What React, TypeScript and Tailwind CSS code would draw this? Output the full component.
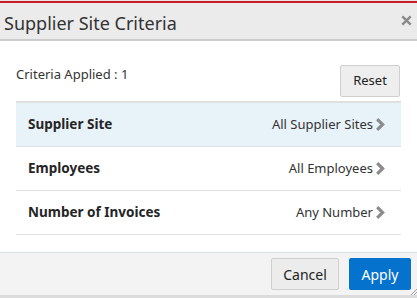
import React from "react";

function Chevron() {
  return (
    <svg width="11" height="13" viewBox="0 0 11 13" className="ml-[2px]">
      <path d="M2.2 1.2 L7.6 6.5 L2.2 11.8" fill="none" stroke="#8c8c8c" strokeWidth="3.2" />
    </svg>
  );
}

function Row({ label, value, active }: { label: string; value: string; active?: boolean }) {
  return (
    <div
      className={
        "flex items-center justify-between h-[44px] pl-[12px] pr-[15px] border-b border-[#e0e0e0] " +
        (active ? "bg-[#e8f2f9]" : "bg-white")
      }
    >
      <span className="text-[13.5px] font-bold text-[#252525]">{label}</span>
      <span className="flex items-center text-[13px] text-[#333]">
        {value}
        <Chevron />
      </span>
    </div>
  );
}

export default function App() {
  return (
    <div
      className="w-[417px] h-[298px] bg-white flex flex-col overflow-hidden"
      style={{ fontFamily: '"Noto Sans", "Open Sans", sans-serif' }}
    >
      <div className="h-[1px] bg-[#e6e6e6]" />
      <div className="h-[2px] bg-[#c81d25]" />
      <div className="h-[38px] bg-[#ebebeb] border-b-2 border-[#cbcbcb] flex items-center justify-between pl-[4px] pr-[5px]">
        <span className="text-[18px] text-[#333] leading-none pt-[4px]">Supplier Site Criteria</span>
        <svg width="11" height="11" viewBox="0 0 11 11" className="mb-[1px]">
          <path d="M1.3 1.3 L9.7 9.7 M9.7 1.3 L1.3 9.7" stroke="#8a8a8a" strokeWidth="2.4" />
        </svg>
      </div>
      <div className="flex-1 px-[16px] flex flex-col">
        <div className="flex justify-between items-start pt-[24px] pr-[1px]">
          <span className="text-[13px] text-[#333] leading-none mt-[3px]">Criteria Applied : 1</span>
          <button className="w-[60px] h-[32px] bg-[#eeeeee] border border-[#cfcfcf] rounded-[2px] text-[13px] text-[#222]">
            Reset
          </button>
        </div>
        <div className="mt-[4px] border-t-2 border-[#e0e0e0]">
          <Row label="Supplier Site" value="All Supplier Sites" active />
          <Row label="Employees" value="All Employees" />
          <Row label="Number of Invoices" value="Any Number" />
        </div>
      </div>
      <div className="relative h-[43px] bg-[#f3f3f3] border-t border-[#d3dde5] flex items-center justify-end gap-[10px] pr-[6px]">
        <button className="w-[68px] h-[32px] bg-[#ececec] border border-[#cfcfcf] rounded-[2px] text-[14px] text-[#222]">
          Cancel
        </button>
        <button className="w-[62px] h-[32px] bg-[#0572ce] rounded-[2px] text-[14px] text-white">
          Apply
        </button>
        <svg width="7" height="7" viewBox="0 0 7 7" className="absolute right-0 bottom-0">
          <path d="M7 1 L1 7 M7 4 L4 7" stroke="#a0a0a0" strokeWidth="1" />
        </svg>
      </div>
      <div className="h-[3px] bg-[#dcdcdc]" />
    </div>
  );
}
